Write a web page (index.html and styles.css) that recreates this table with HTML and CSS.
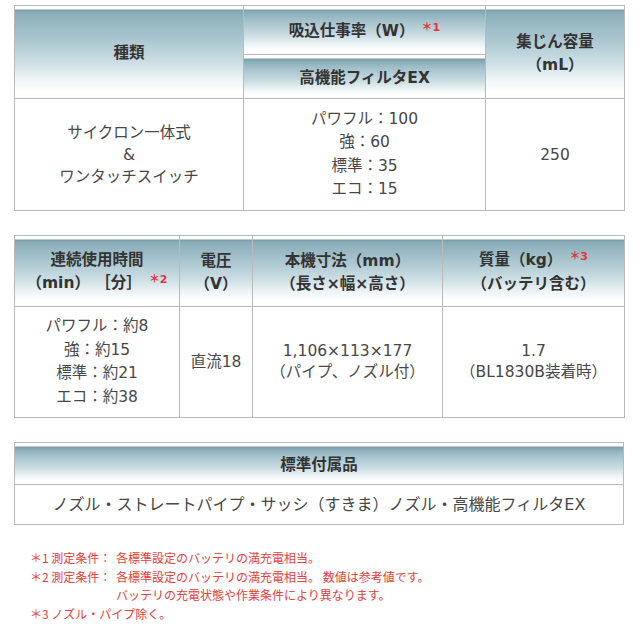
FILE: index.html
```html
<!DOCTYPE html>
<html lang="ja">
<head>
<meta charset="utf-8">
<link rel="stylesheet" href="styles.css">
</head>
<body>
<div class="page">
  <table class="spec spec1">
    <colgroup><col class="c1a"><col class="c1b"><col class="c1c"></colgroup>
    <tr class="h1">
      <th rowspan="2">種類</th>
      <th>吸込仕事率（W）<span class="note">＊1</span></th>
      <th rowspan="2">集じん容量<br>（mL）</th>
    </tr>
    <tr class="h2">
      <th>高機能フィルタEX</th>
    </tr>
    <tr class="b1">
      <td>サイクロン一体式<br>&amp;<br>ワンタッチスイッチ</td>
      <td class="lh">パワフル：100<br>強：60<br>標準：35<br>エコ：15</td>
      <td>250</td>
    </tr>
  </table>

  <table class="spec spec2">
    <colgroup><col class="c2a"><col class="c2b"><col class="c2c"><col class="c2d"></colgroup>
    <tr class="h3">
      <th>連続使用時間<br>（min） ［分］<span class="note">＊2</span></th>
      <th>電圧<br>（V）</th>
      <th>本機寸法（mm）<br>（長さ×幅×高さ）</th>
      <th>質量（kg）<span class="note">＊3</span><br>（バッテリ含む）</th>
    </tr>
    <tr class="b2">
      <td class="lh">パワフル：約8<br>強：約15<br>標準：約21<br>エコ：約38</td>
      <td>直流18</td>
      <td class="tight">1,106×113×177<br>（パイプ、ノズル付）</td>
      <td class="tight">1.7<br>（BL1830B装着時）</td>
    </tr>
  </table>

  <table class="spec spec3">
    <tr class="h4"><th>標準付属品</th></tr>
    <tr class="b3"><td>ノズル・ストレートパイプ・サッシ（すきま）ノズル・高機能フィルタEX</td></tr>
  </table>

  <div class="notes">
    <div class="nl"><span class="nk">＊1 測定条件：</span><span>各標準設定のバッテリの満充電相当。</span></div>
    <div class="nl"><span class="nk">＊2 測定条件：</span><span>各標準設定のバッテリの満充電相当。 数値は参考値です。<br>バッテリの充電状態や作業条件により異なります。</span></div>
    <div class="nl"><span>＊3 ノズル・パイプ除く。</span></div>
  </div>
</div>
</body>
</html>
```

FILE: styles.css
```css
html, body {
  margin: 0;
  padding: 0;
  background: #ffffff;
}

.page {
  padding: 5px 0 0 14px;
  font-family: "DejaVu Sans", "Noto Sans CJK JP", sans-serif;
}

.spec {
  border-collapse: collapse;
  width: 610px;
  table-layout: fixed;
  border: 1px solid #b4b4b4;
  margin-bottom: 24px;
}

.spec th,
.spec td {
  border: 1px solid #b9b9b9;
  padding: 0;
  text-align: center;
  vertical-align: middle;
}

.spec th {
  color: #333333;
  font-size: 15.5px;
  font-weight: bold;
  line-height: 23px;
  padding-top: 3px;
  background: linear-gradient(to bottom,
    #ffffff 0, #ffffff 3px,
    #769aa6 3px, #8aadb9 6px,
    #a3c1cb 30%, #c8dbe1 58%,
    #eef5f7 80%, #ffffff 92%, #ffffff 100%);
}

.spec td {
  color: #474747;
  font-size: 15.5px;
  line-height: 22px;
}

.spec td.lh { line-height: 23.5px; }
.spec td.tight { line-height: 21px; }

.c1a { width: 229px; }
.c1b { width: 242px; }
.c1c { width: 139px; }

.c2a { width: 165px; }
.c2b { width: 73px; }
.c2c { width: 190px; }
.c2d { width: 182px; }

.h1 { height: 49px; }
.h2 { height: 44px; }
.b1 { height: 112px; }

.h3 { height: 71px; }
.b2 { height: 111px; }

.h4 { height: 42px; }
.b3 { height: 40px; }
.b3 td { font-size: 16px; }

.note {
  color: #e5333f;
  font-size: 11px;
  font-weight: bold;
  position: relative;
  top: -5px;
  margin-left: 7px;
}

.notes {
  padding: 0 0 0 16px;
  margin-top: 0;
  color: #e2413c;
  font-size: 12px;
  line-height: 18.5px;
  font-family: "Noto Sans CJK JP", sans-serif;
}

.nl {
  display: flex;
}

.nk {
  flex: none;
  width: 86px;
}
```
